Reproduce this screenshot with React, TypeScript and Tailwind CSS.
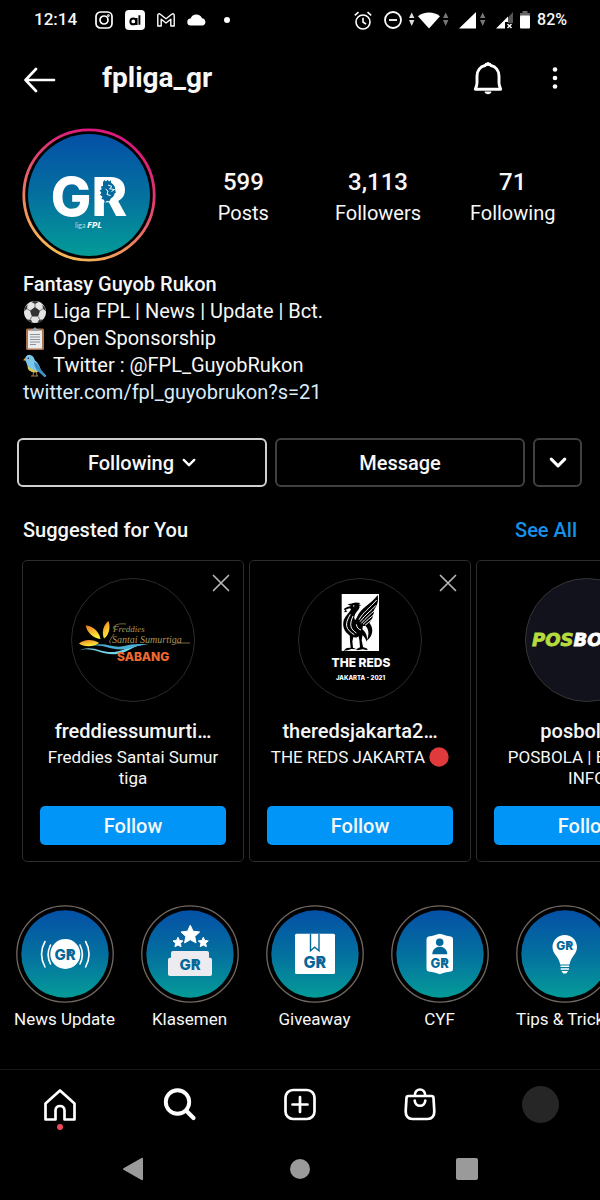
import type { ReactNode } from "react";

const BLUE = "#05689a";

function Star({ cx, cy, r }: { cx: number; cy: number; r: number }) {
  const points = Array.from({ length: 10 }, (_, i) => {
    const a = (Math.PI / 5) * i - Math.PI / 2;
    const d = i % 2 ? r * 0.48 : r;
    return `${(cx + d * Math.cos(a)).toFixed(2)},${(cy + d * Math.sin(a)).toFixed(2)}`;
  }).join(" ");
  return <polygon points={points} fill="#fff" stroke="#fff" strokeWidth="1" strokeLinejoin="round" />;
}

function Mark({ x, y, size }: { x: number; y: number; size: number }) {
  return (
    <g>
      <text x={x} y={y} fontSize={size} fontWeight="800" fontFamily="Inter, sans-serif" fill={BLUE} textAnchor="middle">
        GR
      </text>
      <circle cx={x + size * 0.34} cy={y - size * 0.48} r={size * 0.11} fill={BLUE} />
    </g>
  );
}

function StatusBar() {
  return (
    <div className="flex h-10 items-center justify-between pl-[34px] pr-[33px] text-[17px] font-medium">
      <div className="flex items-center">
        <span className="w-[61px]">12:14</span>
        <svg className="mr-3" width="18" height="18" viewBox="0 0 18 18" fill="none" stroke="#fff" strokeWidth="1.7">
          <rect x="1" y="1" width="16" height="16" rx="4.5" />
          <circle cx="9" cy="9" r="4" />
          <circle cx="13.4" cy="4.6" r=".5" />
        </svg>
        <svg className="mr-3" width="20" height="20" viewBox="0 0 20 20" fill="none">
          <rect width="20" height="20" rx="4" fill="#fff" />
          <circle cx="8.3" cy="11.4" r="2.9" stroke="#000" strokeWidth="2" />
          <path d="M11.6 8v7M14.4 5.3v9.4" stroke="#000" strokeWidth="1.9" />
        </svg>
        <svg className="mr-3" width="18" height="14" viewBox="0 0 18 14" fill="none" stroke="#fff" strokeWidth="1.4" strokeLinejoin="round">
          <path d="M.8 13V2.3C.8.8 2.2.4 3.3 1.3L9 5.7l5.700-4.400c1.100-.900 2.500-.500 2.500 1V13h-3.400V6.300L9 10 4.200 6.300V13Z" />
        </svg>
        <svg className="mr-[17px]" width="20" height="12" viewBox="0 0 20 12" fill="#fff">
          <path d="M4 11.500a3.500 3.500 0 0 1-.400-7A6.200 6.200 0 0 1 15 4.200a3.800 3.800 0 0 1 1 7.300Z" />
        </svg>
        <svg width="6" height="6" viewBox="0 0 6 6" fill="#fff">
          <circle cx="3" cy="3" r="3" />
        </svg>
      </div>
      <div className="flex items-center">
        <svg className="mr-3" width="18" height="19" viewBox="0 0 18 19" fill="none" stroke="#fff" strokeWidth="1.6">
          <circle cx="9" cy="11" r="7" />
          <path d="M9 6.800V11l3 2.200M.8 4.300 4.500 1.200M17.200 4.300 13.500 1.200" />
        </svg>
        <svg className="mr-[6px]" width="18" height="18" viewBox="0 0 18 18" fill="none" stroke="#fff" strokeWidth="1.800">
          <circle cx="9" cy="9" r="8" />
          <path d="M5 9h8" />
        </svg>
        <svg className="mr-[9px]" width="42" height="18" viewBox="0 0 42 18">
          <path d="M1 7 3.700 1.500 6.400 7ZM1 9l2.700 6L6.400 9Z" fill="#ddd" />
          <path d="M10 5.200C16 .2 26 .2 32 5.200L21 17.500Z" fill="#fff" />
          <path d="M35 7l2.700-5.500L40.400 7ZM35 9l2.700 6 2.700-6Z" fill="#777" />
        </svg>
        <svg className="mr-[9px]" width="28" height="18" viewBox="0 0 28 18">
          <path d="M0 17.500 17 1v16.500Z" fill="#fff" />
          <path d="M21 7l2.700-5.500L26.400 7ZM21 9l2.700 6 2.700-6Z" fill="#777" />
        </svg>
        <svg className="mr-[5px]" width="18" height="18" viewBox="0 0 18 18">
          <path d="M12 6.500 17 1v11h-5Z" fill="#555" />
          <path d="M0 17.500 12 5.500V11H9v6.500Z" fill="#fff" />
          <path d="m11.500 13 4 4m0-4-4 4" stroke="#fff" strokeWidth="1.400" />
        </svg>
        <svg className="mr-[6px]" width="12" height="18" viewBox="0 0 12 18">
          <path d="M1 2h2.500V0h5v2H11v3H1Z" fill="#666" />
          <rect x="1" y="4.500" width="10" height="13" rx="1" fill="#fff" />
        </svg>
        <span className="text-[16px]">82%</span>
      </div>
    </div>
  );
}

function TopBar() {
  return (
    <header className="flex h-20 items-center pl-6 pr-[42px]">
      <button aria-label="Back" className="mr-[46px] w-8">
        <svg width="32" height="26" viewBox="0 0 32 26" fill="none" stroke="#fff" strokeWidth="2.600" strokeLinecap="round" strokeLinejoin="round">
          <path d="M30 13H1.500M12 2 1.500 13 12 24" />
        </svg>
      </button>
      <h1 className="flex-1 pb-1 text-[28px] font-bold">fpliga_gr</h1>
      <button aria-label="Notifications" className="mr-[49px] pb-1">
        <svg width="30" height="34" viewBox="0 0 30 34" fill="none" stroke="#fff" strokeWidth="2.900" strokeLinejoin="round">
          <path d="M15 3.300c-2 0-2.500.800-3 1.200C7 5.500 4 10 4 15v7c0 2.500-.700 4-1.700 6.200h25.400c-1-2.200-1.700-3.700-1.700-6.200v-7c0-5-3-9.500-8-10.500-.500-.400-1-1.200-3-1.200Z" />
          <path d="M11.500 30.500h7c-.500 3.700-6.500 3.700-7 0Z" fill="#fff" stroke="none" />
          <path d="M12 2.500 15 1l3 1.500v2h-6Z" fill="#fff" stroke="none" />
        </svg>
      </button>
      <button aria-label="More options" className="pb-1">
        <svg width="6" height="22" viewBox="0 0 6 22" fill="#fff">
          <circle cx="3" cy="2.500" r="2.300" />
          <circle cx="3" cy="11" r="2.300" />
          <circle cx="3" cy="19.500" r="2.300" />
        </svg>
      </button>
    </header>
  );
}

function ProfileAvatar() {
  return (
    <svg className="shrink-0" width="134" height="134" viewBox="0 0 134 134" role="img" aria-label="GR liga FPL">
      <defs>
        <linearGradient id="ring" x1=".75" y1=".1" x2=".35" y2="1">
          <stop offset="0" stopColor="#dc1a7c" />
          <stop offset=".35" stopColor="#e23f72" />
          <stop offset=".7" stopColor="#ee8560" />
          <stop offset="1" stopColor="#f7b955" />
        </linearGradient>
        <linearGradient id="sea" x1="0" y1="0" x2="0" y2="1">
          <stop offset="0" stopColor="#0450a6" />
          <stop offset=".5" stopColor="#04709f" />
          <stop offset="1" stopColor="#049b98" />
        </linearGradient>
      </defs>
      <circle cx="67" cy="67" r="65.200" fill="none" stroke="url(#ring)" strokeWidth="2.800" />
      <circle cx="67" cy="67" r="61" fill="url(#sea)" />
      <text x="67" y="88" fontSize="54" fontWeight="800" fontFamily="Inter, sans-serif" fill="#fff" textAnchor="middle">
        GR
      </text>
      <path
        d="M81 54l1.500-2 1.500 1.500 1.600-1.700 1.500 1.700 1.700-1.300.300 2.600c2.800 1.500 4.300 4.600 4 7.700l.900 2-1.400.800c-.300 2.600-1.800 4.300-3.800 5.100l-1.600 3-2-.600-2.500 1.600-.700-2.700-2.600-.700 1.100-2.300-2.600-1.900 1.500-1.900-1.700-2.600 2-1-.800-2.700 2.100-.500Z"
        fill={BLUE}
      />
      <path d="m86 57 4 1.500-2.500 2.300 5 .700-3 2m-6-2.500 2.500 2-1 3.500 3.600 1" fill="none" stroke="#fff" strokeWidth="1" />
      <text x="53" y="100" fontSize="7" fontFamily="Lato, sans-serif" fill="#b9dce8">liga</text>
      <text x="65" y="100" fontSize="9" fontWeight="700" fontStyle="italic" fontFamily="'Open Sans', sans-serif" fill="#fff">FPL</text>
    </svg>
  );
}

function Stat({ value, label }: { value: string; label: string }) {
  return (
    <div className="flex flex-1 flex-col items-center pt-1">
      <span className="text-[24px] font-medium leading-[32px]">{value}</span>
      <span className="text-[20px] leading-[30px]">{label}</span>
    </div>
  );
}

function Ball() {
  return (
    <svg width="24" height="24" viewBox="0 0 24 24" role="img" aria-label="Soccer ball">
      <circle cx="12" cy="12" r="11" fill="#e4e4e4" />
      <path d="m12 7 5 3.700-1.900 5.800H8.900L7 10.700ZM8 1.800 12 4l4-2.200-4-.900ZM1 11.500l3-2.800.600-4.200-2.800 3.600ZM23 11.500l-3-2.800-.600-4.200 2.800 3.600ZM4 19.500l4 .300 1.500 3-3-1ZM20 19.500l-4 .300-1.500 3 3-1Z" fill="#333" />
      <path d="M12 7V4M17 10.700l3-2M15.100 16.500l1.700 3M8.900 16.500l-1.700 3M7 10.700l-3-2" stroke="#777" />
    </svg>
  );
}

function Clipboard() {
  return (
    <svg width="24" height="24" viewBox="0 0 24 24" role="img" aria-label="Clipboard">
      <rect x="3" y="1.500" width="18" height="21.500" rx="1.500" fill="#a87550" />
      <rect x="5" y="3.500" width="14" height="18" fill="#ececec" />
      <path d="M8 4V2h2.500c.300-2 2.700-2 3 0H16v2Z" fill="#9ba3a8" />
      <path d="M7 7.500h10M7 10h10M7 12.500h10M7 15h10M7 17.500h6" stroke="#87929d" strokeWidth="1" />
    </svg>
  );
}

function Bird() {
  return (
    <svg width="24" height="24" viewBox="0 0 24 24" role="img" aria-label="Bird">
      <path d="M2 6C2 2.500 4.500 .5 7 .9c3 .300 4.200 3 5 5.600 3 2 5 6 5.500 9l6 6.500-2 .900-6-5.400c-4 .800-8-.500-10-4C3.500 11 4 8.500 2 6Z" fill="#7cc6ea" />
      <path d="M11 8c4 1.500 6 5 7 8l5 6-1.500.5-6-5C13 15.500 11 12 11 8Z" fill="#3b8fc4" />
      <path d="M4.500 12c3 2 6 4 10.500 5.500-3.500 2-8 .5-10-2.500Z" fill="#d3c75a" />
      <path d="M2.500 3.500 0 6.300l2.700.500Z" fill="#e7a83c" />
      <circle cx="5.300" cy="4.300" r=".8" fill="#222" />
      <path d="m10.500 18-.500 4m3.500-4 .500 4M8 22h3.500m0 0h3.500" stroke="#a98646" strokeWidth="1" />
    </svg>
  );
}

function BioLine({ icon, children }: { icon: ReactNode; children: ReactNode }) {
  return (
    <p className="flex items-center gap-[6px]">
      {icon}
      <span>{children}</span>
    </p>
  );
}

function Chevron({ size }: { size: number }) {
  return (
    <svg width={size} height={size} viewBox="0 0 16 16" fill="none" stroke="#fff" strokeWidth="2.700" strokeLinecap="round" strokeLinejoin="round">
      <path d="m2 4.500 6 6 6-6" />
    </svg>
  );
}

function FreddiesLogo() {
  return (
    <svg width="124" height="124" viewBox="0 0 124 124" role="img" aria-label="Freddies Santai Sumurtiga Sabang">
      <defs>
        <linearGradient id="petal" x1="0" y1="0" x2=".4" y2="1">
          <stop offset="0" stopColor="#e9781e" />
          <stop offset="1" stopColor="#fff03a" />
        </linearGradient>
      </defs>
      <circle cx="62" cy="62" r="61.500" fill="#000" stroke="#2b2b2b" />
      <path d="M8 65.500C13 60.500 23 61 28 65 23 69 13 69.500 8 65.500Z" fill="url(#petal)" />
      <path d="M14.700 47.500C21 47.500 28 53 29.500 61 22 60 16 54.500 14.700 47.500Z" fill="url(#petal)" />
      <path d="M37.500 43C40 50 37.500 57.500 33 60.500 30.500 55 32 47 37.500 43Z" fill="url(#petal)" />
      <path d="M8 72.500c14-7 23 4 38 1 10-2 15-8 27-7-11 1-15 8-27 9.500C31 78 22 68 8 72.500Z" fill="#72d3e9" />
      <path d="M21 68c12-5 21 3 32 0 7-2 18-3 26-1-11-1-18 4-28 4.500C39 72 32 66 21 68Z" fill="#4aaed2" />
      <g fill="#ad9655" fontFamily="'Liberation Serif', serif" fontStyle="italic">
        <text x="42" y="54" fontSize="9">Freddies</text>
        <text x="41" y="65" fontSize="10">Santai Sumurtiga</text>
      </g>
      <path d="M43 51c-2-3 3-6 12-5M105 65h14M43 56c-4 6-6 9-3 9" stroke="#ad9655" strokeWidth=".7" fill="none" />
      <text x="46" y="83" fontSize="12" fontWeight="800" fontFamily="Inter, sans-serif" fill="#ef6a2e">SABANG</text>
    </svg>
  );
}

function RedsLogo() {
  return (
    <svg width="124" height="124" viewBox="0 0 124 124" role="img" aria-label="The Reds Jakarta 2021">
      <circle cx="62" cy="62" r="61.500" fill="#000" stroke="#2b2b2b" />
      <rect x="43.700" y="16" width="37.300" height="57" fill="#fff" />
      <g transform="translate(43.700 16) scale(.3333)" fill="#000">
        <path d="M31 29c8-3 19-2 22 7 2 9-7 15-12 23-4 8-5 14 0 19 5-8 10-15 17-21l6 11c1 20 0 40-8 54-7 9-17 11-27 5C12 119 2 102 5 84c2-16 17-25 23-39l-5-2-11 4 5 6-12 2 6-5-5-5 10-6 9-2Z" />
        <path d="M18 32c6-5 10-1 15-4 8-4 14-2 23-1l-5 4 8 3-8 2 2 6Z" />
        <path d="M45 72C55 42 88 31 108 3c3 18-1 31-10 43-3 20-8 41-25 49-10 4-21-3-28-10Z" />
        <path d="M68 93c12 8 17 25 7 47 21-14 22-42 5-56ZM60 104c12 9 19 22 15 40-4-15-12-22-25-28Z" />
        <path d="M24 118h14l-6 24 2 19 11 5-16-1-12 4-12 1 10-8 12-1-2-18ZM48 112l16 2-4 25 4 20 13 5v5l-14-3-15 3-5-3 12-6-2-21Z" />
        <g fill="none" stroke="#fff" strokeWidth="3">
          <path d="M52 77c12-22 30-33 53-59M55 83c16-22 32-31 48-49M59 88c14-16 26-26 41-40M64 91c12-12 21-20 33-29M70 94c8-7 15-12 23-19" />
          <path d="M26 61c-19 31-14 45 12 61M34 66c-12 27-8 39 10 51M44 91c1 9 6 15 14 17" />
        </g>
        <circle cx="36" cy="36" r="2" fill="#fff" />
      </g>
      <g fill="#fff" fontFamily="Inter, sans-serif" fontWeight="800" textAnchor="middle">
        <text x="63" y="89" fontSize="12">THE REDS</text>
        <text x="62.500" y="102" fontSize="6">JAKARTA - 2021</text>
      </g>
    </svg>
  );
}

function PosbolaLogo() {
  return (
    <svg width="124" height="124" viewBox="0 0 124 124" role="img" aria-label="Posbola">
      <circle cx="62" cy="62" r="61.500" fill="#11121b" stroke="#35353a" />
      <text x="7" y="68" fontSize="18" fontWeight="700" fontStyle="italic" fontFamily="'DejaVu Sans', sans-serif" fill="#b5dc3c" stroke="#b5dc3c" strokeWidth=".8">
        POS<tspan fill="#fff" stroke="#fff">BOLA</tspan>
      </text>
    </svg>
  );
}

function SuggestionCard({ logo, name, children }: { logo: ReactNode; name: string; children: ReactNode }) {
  return (
    <article className="relative flex w-[222px] shrink-0 flex-col items-center rounded-[5px] border border-[#2c2c2c] px-[17px] pb-4 pt-[17px]">
      <button aria-label={`Dismiss ${name}`} className="absolute right-[13px] top-[13px]">
        <svg width="18" height="18" viewBox="0 0 18 18" stroke="#b5b5b5" strokeWidth="1.700" strokeLinecap="round">
          <path d="m1.500 1.500 15 15m0-15-15 15" />
        </svg>
      </button>
      {logo}
      <h3 className="mt-4 text-[20px] font-medium leading-[26px]">{name}</h3>
      <p className="mt-[3px] h-[52px] whitespace-nowrap text-center text-[17px] leading-[21px]">{children}</p>
      <button className="mt-[7px] h-[39px] w-full rounded-[5px] bg-[#0095f6] pt-px text-[20px] font-medium">Follow</button>
    </article>
  );
}

function Highlight({ label, children }: { label: string; children: ReactNode }) {
  return (
    <a href="#highlight" className="flex w-[125px] shrink-0 flex-col items-center">
      <svg width="98" height="98" viewBox="0 0 98 98" aria-hidden="true">
        <circle cx="49" cy="49" r="48.200" fill="#000" stroke="#716861" strokeWidth="1.300" />
        <circle cx="49" cy="49" r="43.700" fill="url(#sea)" />
        {children}
      </svg>
      <span className="mt-[5px] whitespace-nowrap text-[17px] leading-[22px]">{label}</span>
    </a>
  );
}

function Highlights() {
  return (
    <section aria-label="Highlights" className="mt-[43px] flex overflow-x-auto pl-[2px] [scrollbar-width:none]">
      <Highlight label="News Update">
        <circle cx="49.300" cy="49" r="15" fill="#fff" />
        <path d="M29 36.500c-4.500 8-4.500 17 0 25.500M34.500 40c-3 6-3 13 0 19M69.600 36.500c4.500 8 4.500 17 0 25.500M64 40c3 6 3 13 0 19" fill="none" stroke="#fff" strokeWidth="1.600" strokeLinecap="round" />
        <Mark x={49} y={54.5} size={15} />
      </Highlight>
      <Highlight label="Klasemen">
        <Star cx={49.3} cy={30} r={9.8} />
        <Star cx={37} cy={37.5} r={5.2} />
        <Star cx={62.3} cy={37.5} r={5.2} />
        <path d="M32 46h34q2 0 2 2v4.700h1q2 0 2 2V69q0 2-2 2H29q-2 0-2-2V54.700q0-2 2-2h1V48q0-2 2-2Z" fill="#ececf0" />
        <Mark x={49} y={64.5} size={15} />
      </Highlight>
      <Highlight label="Giveaway">
        <rect x="29" y="28.700" width="40" height="40.300" rx="1.500" fill="#fff" />
        <path d="M44.500 28.700v17l4.200-3.500 4.300 3.500v-17" fill="none" stroke={BLUE} strokeWidth="1.400" />
        <Mark x={48.7} y={63} size={16} />
      </Highlight>
      <Highlight label="CYF">
        <path d="M35.500 34q0-2 2-2.500c5-.500 7-1.500 11.300-2.700 4.200 1.200 6.200 2.200 11.200 2.700q2 .500 2 2.500v30q0 2-2 2.500c-5 .500-7 1.500-11.200 2.700-4.300-1.200-6.300-2.200-11.300-2.700q-2-.500-2-2.500Z" fill="#fff" />
        <circle cx="48.700" cy="37.300" r="3.800" fill={BLUE} />
        <path d="M41.300 49.300c0-10 15-10 15 0Z" fill={BLUE} />
        <Mark x={48.7} y={62.500} size={13} />
      </Highlight>
      <Highlight label="Tips &amp; Tricks">
        <path d="M48.700 30c7 0 12.300 5.500 12.300 12 0 7-6.500 10-7.500 17.500h-9.300C43.200 52 36.500 49 36.500 42c0-6.500 5.300-12 12.200-12ZM44.500 60.500h8.700v1.600h-8.700ZM44.700 63.200h8.300v1.600h-8.300ZM45.500 66h6.700l-2 2.400h-3Z" fill="#fff" />
        <Mark x={48.7} y={45} size={12} />
      </Highlight>
    </section>
  );
}

function TabBar() {
  return (
    <nav className="flex h-[70px] items-center border-t border-[#1a1a1a]">
      <a href="#home" aria-label="Home" className="relative flex flex-1 justify-center">
        <svg width="34" height="34" viewBox="0 0 34 34" fill="none" stroke="#fff" strokeWidth="2.700" strokeLinejoin="round">
          <path d="M2.500 31.500v-16L17 2.500l14.500 13v16h-10v-9c0-6-9-6-9 0v9Z" />
        </svg>
        <span className="absolute top-[36px] size-[6px] rounded-full bg-[#ed4956]" />
      </a>
      <a href="#search" aria-label="Search" className="flex flex-1 justify-center">
        <svg width="34" height="34" viewBox="0 0 34 34" fill="none" stroke="#fff" strokeLinecap="round">
          <circle cx="14.500" cy="14" r="11.700" strokeWidth="3.900" />
          <path d="m24 23.500 6.500 6.500" strokeWidth="4.200" />
        </svg>
      </a>
      <a href="#create" aria-label="Create" className="flex flex-1 justify-center">
        <svg width="34" height="34" viewBox="0 0 34 34" fill="none" stroke="#fff" strokeWidth="2.700" strokeLinecap="round">
          <rect x="2.500" y="2" width="29" height="29" rx="7.500" />
          <path d="M17 9v15M9.500 16.500h15" />
        </svg>
      </a>
      <a href="#shop" aria-label="Shop" className="flex flex-1 justify-center">
        <svg width="34" height="34" viewBox="0 0 34 34" fill="none" stroke="#fff" strokeWidth="2.700" strokeLinecap="round">
          <path d="M5.500 8h23c1.200 0 2 .800 2 2l.800 13c.200 5-2.300 8-6.800 8h-15c-4.500 0-7-3-6.800-8l.8-13c0-1.200.8-2 2-2Z" />
          <path d="M11.700 7.500c.5-8 10.100-8 10.600 0M11.700 12.500c.5 7 10.100 7 10.600 0" />
        </svg>
      </a>
      <a href="#profile" aria-label="Profile" className="flex flex-1 justify-center">
        <span className="size-[37px] rounded-full bg-[#262626]" />
      </a>
    </nav>
  );
}

function SystemNav() {
  return (
    <div className="flex h-[61px] items-center justify-center gap-[146px] pb-[2px]">
      <button aria-label="System back">
        <svg width="22" height="24" viewBox="0 0 22 24" fill="#9a9a9a" stroke="#9a9a9a" strokeWidth="2" strokeLinejoin="round">
          <path d="M20 1.800v20.400L2 12Z" />
        </svg>
      </button>
      <button aria-label="System home" className="size-5 rounded-full bg-[#9a9a9a]" />
      <button aria-label="Recent apps" className="size-[22px] rounded-[2px] bg-[#9a9a9a]" />
    </div>
  );
}

export default function App() {
  return (
    <div className="flex min-h-screen flex-col bg-black font-[Roboto,sans-serif] text-[#f7f7f7]">
      <StatusBar />
      <TopBar />
      <main>
        <section className="flex items-center gap-5 pl-[22px] pr-5 pt-2">
          <ProfileAvatar />
          <div className="flex flex-1">
            <Stat value="599" label="Posts" />
            <Stat value="3,113" label="Followers" />
            <Stat value="71" label="Following" />
          </div>
        </section>

        <section className="mt-[9px] px-[23px] text-[20px] leading-[27px]">
          <h2 className="font-medium">Fantasy Guyob Rukon</h2>
          <BioLine icon={<Ball />}>Liga FPL | News | Update | Bct.</BioLine>
          <BioLine icon={<Clipboard />}>Open Sponsorship</BioLine>
          <BioLine icon={<Bird />}>Twitter : @FPL_GuyobRukon</BioLine>
          <a href="#link" className="block text-[#d9ecfb]">twitter.com/fpl_guyobrukon?s=21</a>
        </section>

        <div className="mt-8 flex h-[49px] gap-2 pl-[17px] pr-[18px] text-[20px] font-medium">
          <button className="flex flex-1 items-center justify-center gap-2 rounded-[6px] border-2 border-[#cfcfcf]">
            Following
            <Chevron size={14} />
          </button>
          <button className="flex-1 rounded-[6px] border-2 border-[#404040]">Message</button>
          <button aria-label="Show suggestions" className="flex w-[49px] items-center justify-center rounded-[6px] border-2 border-[#404040]">
            <Chevron size={18} />
          </button>
        </div>

        <div className="mt-7 flex justify-between px-[23px] text-[20px] font-medium leading-[30px]">
          <h2>Suggested for You</h2>
          <a href="#all" className="text-[#1592ea]">See All</a>
        </div>

        <section aria-label="Suggested accounts" className="mt-[15px] flex gap-[5px] overflow-x-auto pl-[22px] [scrollbar-width:none]">
          <SuggestionCard logo={<FreddiesLogo />} name="freddiessumurti…">
            Freddies Santai Sumur
            <br />
            tiga
          </SuggestionCard>
          <SuggestionCard logo={<RedsLogo />} name="theredsjakarta2…">
            THE REDS JAKARTA{" "}
            <svg className="inline-block align-top" width="20" height="20" viewBox="0 0 20 20" role="img" aria-label="Red circle">
              <circle cx="10" cy="10" r="9.700" fill="#e03a3c" />
            </svg>
          </SuggestionCard>
          <SuggestionCard logo={<PosbolaLogo />} name="posbola.id">
            POSBOLA | BERITA B
            <br />
            INFO
          </SuggestionCard>
        </section>

        <Highlights />
      </main>
      <footer className="mt-auto">
        <TabBar />
        <SystemNav />
      </footer>
    </div>
  );
}
